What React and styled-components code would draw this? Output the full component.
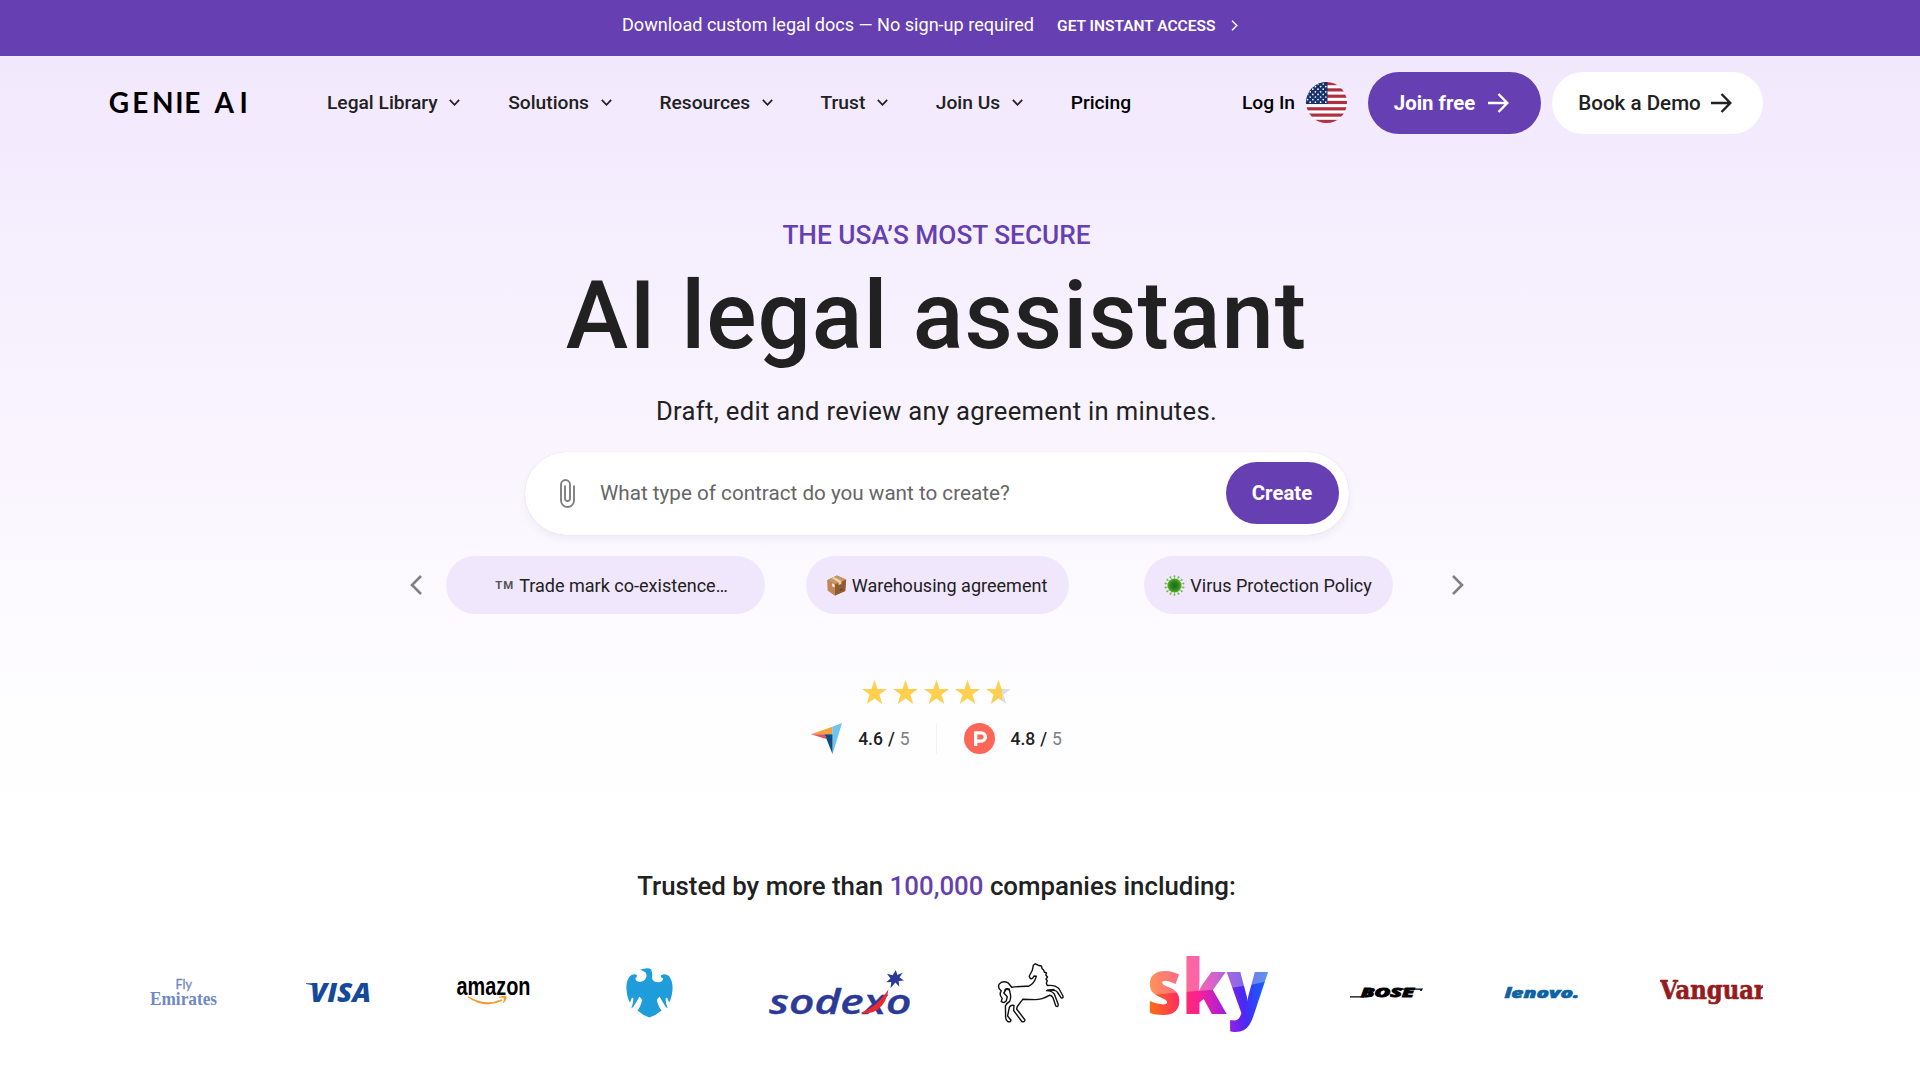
import React from "react";
import styled, { createGlobalStyle } from "styled-components";

const Global = createGlobalStyle`
  *{box-sizing:border-box}
  body{margin:0;background:#fff;font-family:Roboto,"Liberation Sans",sans-serif;color:#212121;overflow:hidden}
  button{font-family:inherit;border:0;margin:0;padding:0;cursor:pointer}
  svg{display:block;flex:none}
`;
const Page = styled.div`
  width:1920px;height:1080px;overflow:hidden;
  background:linear-gradient(180deg,#f2e8fd 56px,#f5effe 240px,#f9f4fe 440px,#fcfaff 600px,#fff 810px);
`;
const Banner = styled.div`
  height:56px;background:#663fb3;color:#fff;display:flex;align-items:center;
  padding:0 0 6px 622px;white-space:nowrap;
`;
const BannerText = styled.span`font-size:18.07px;line-height:24px;`;
const BannerLink = styled.a`
  display:flex;align-items:center;gap:16px;margin-left:23px;font-size:15.5px;font-weight:600;line-height:24px;
  padding-top:1px;
`;
const Container = styled.div`width:1653px;margin-left:110px;`;
const Header = styled.header`height:94px;display:flex;align-items:center;white-space:nowrap;`;
const Nav = styled.nav`display:flex;gap:48px;margin-left:81px;padding-bottom:1px;`;
const NavItem = styled.a`
  display:flex;align-items:center;gap:11.5px;font-size:19.2px;font-weight:500;line-height:24px;
  color:${(p) => (p.$dark ? "#000" : "#212121")};
`;
const Actions = styled.div`display:flex;align-items:center;margin-left:auto;`;
const Account = styled.div`display:flex;align-items:center;gap:11px;padding-bottom:1px;`;
const Login = styled.a`font-size:19.2px;font-weight:500;color:#000;`;
const Pill = styled.button`
  height:62px;border-radius:31px;display:flex;align-items:center;justify-content:center;
  gap:${(p) => p.$gap || 0}px;width:${(p) => p.$w}px;margin-left:${(p) => p.$ml || 0}px;
  padding:0 ${(p) => p.$pr || 0}px 1px 0;
  font-size:${(p) => (p.$light ? 20.6 : 20.4)}px;font-weight:${(p) => (p.$light ? 500 : 700)};
  background:${(p) => (p.$light ? "#fff" : "#663fb3")};color:${(p) => (p.$light ? "#212121" : "#fff")};
`;
const Hero = styled.main`padding-top:69px;display:flex;flex-direction:column;align-items:center;`;
const Eyebrow = styled.div`font-size:26.25px;font-weight:500;line-height:32px;color:#663fb3;`;
const Title = styled.h1`margin:15px 0 0;font-size:94px;font-weight:500;line-height:100px;letter-spacing:1px;`;
const Sub = styled.p`margin:29px 0 0;font-size:25.6px;line-height:32px;letter-spacing:.32px;`;
const Search = styled.div`
  margin-top:25px;width:824px;height:83px;border-radius:41.5px;background:#fff;display:flex;align-items:center;
  padding:0 10px 1px 35px;box-shadow:0 0 1px rgba(0,0,0,.14),0 4px 8px rgba(60,30,100,.06);
`;
const Placeholder = styled.span`flex:1;margin-left:25.5px;font-size:20.67px;color:#666;`;
const Suggestions = styled.div`margin-top:21px;height:58px;width:1054px;display:flex;align-items:center;`;
const NextArrow = styled.div`margin-left:59px;`;
const Chip = styled.button`
  height:58px;border-radius:29px;background:#f1e7fd;width:${(p) => p.$w}px;margin-left:${(p) => p.$ml}px;
  padding:1px 0 0 ${(p) => p.$pl || 0}px;
  display:flex;align-items:center;justify-content:center;gap:5px;font-size:18.05px;color:#212121;white-space:nowrap;
`;
const TradeMark = styled.span`font-size:11.4px;font-weight:700;color:#555;letter-spacing:.9px;margin-top:-2px;`;
const Stars = styled.div`margin-top:66px;height:24px;display:flex;gap:6px;`;
const Ratings = styled.div`margin-top:19px;height:31px;display:flex;align-items:center;`;
const Score = styled.span`
  font-size:17.5px;font-weight:500;margin-left:16px;word-spacing:.6px;
  em{font-style:normal;font-weight:400;color:#808080}
`;
const Divider = styled.i`width:1px;height:31px;background:#f3f1f7;margin:0 27px 0 26px;`;
const Trusted = styled.h2`
  margin:116px 0 0;font-size:25.83px;font-weight:500;line-height:32px;text-align:center;
  b{font-weight:500;color:#663fb3}
`;
const Logos = styled.div`margin-top:51px;height:79px;display:flex;align-items:center;`;
const LogoSlot = styled.div`
  margin-left:${(p) => p.$ml}px;flex:none;
  svg{overflow:${(p) => (p.$clip ? "hidden" : "visible")}}
`;

const Caret = () => (
  <svg width="11" height="7" viewBox="0 0 11 7" fill="none" stroke="#212121" strokeWidth="1.7"><path d="M.8.8 5.5 5.8 10.2.8" /></svg>
);
const Arrow = ({ c }) => (
  <svg width="21" height="20" viewBox="0 0 21 20" fill="none" stroke={c} strokeWidth="2.4"><path d="M0 10H19M10.5 1 19.3 10 10.5 19" /></svg>
);
const Chevron = ({ left }) => (
  <svg width="12" height="20" viewBox="0 0 12 20" fill="none" stroke="#808080" strokeWidth="2.6"><path d={left ? "M11 1 2 10 11 19" : "M1 1 10 10 1 19"} /></svg>
);
const Flag = () => (
  <svg width="41" height="41" viewBox="0 0 41 41">
    <clipPath id="fc"><circle cx="20.5" cy="20.5" r="20.5" /></clipPath>
    <g clipPath="url(#fc)">
      <rect width="41" height="41" fill="#fff" />
      {[0, 1, 2, 3, 4, 5, 6].map((i) => <rect key={i} y={i * 6.3} width="41" height="3.2" fill="#b22f43" />)}
      <rect width="21.5" height="22" fill="#16326b" />
      {[0, 1, 2, 3, 4, 5, 6, 7].map((r) => [0, 1, 2, 3].map((c) => (
        <circle key={r + "-" + c} cx={1.6 + c * 5.2 + (r % 2) * 2.6} cy={2 + r * 2.6} r=".85" fill="#fff" />
      )))}
    </g>
  </svg>
);
const Clip = () => (
  <svg width="15" height="29" viewBox="0 0 15 29" fill="none" stroke="#808080" strokeWidth="1.9">
    <path d="M14 6.5V21.5A6.5 6.5 0 0 1 1 21.5V5.5A4.5 4.5 0 0 1 10 5.5V19.5A2.5 2.5 0 0 1 5 19.5V6.5" />
  </svg>
);
const Box = () => (
  <svg width="20" height="21" viewBox="0 0 20 21">
    <path d="M10 .5 19 4.5 18.2 16 8 20.5 .8 15.5 .5 5Z" fill="#a9713f" />
    <path d="M.5 5 8.2 9 8 20.5 .8 15.5Z" fill="#c08850" />
    <path d="M8.2 9 19.2 4.6 18.2 16 8 20.5Z" fill="#8f5c33" />
    <path d="M10 .5 19.2 4.6 8.2 9 .5 5Z" fill="#c99763" />
    <path d="M4.6 3 7 1.9 14.4 6 14.3 9 11.5 10.1 11.6 7.5Z" fill="#e8d0b0" />
    <path d="M5.2 8.2 7.6 9.4V12.6L5.2 11.3Z" fill="#f2eee8" />
    <path d="M13 15.2 16 14" stroke="#5e3b20" strokeWidth=".9" />
  </svg>
);
const Virus = () => (
  <svg width="21" height="21" viewBox="-10.5 -10.5 21 21">
    <defs><radialGradient id="vg"><stop offset="0" stopColor="#1d6b12" /><stop offset=".6" stopColor="#2f8a1c" /><stop offset="1" stopColor="#58b030" /></radialGradient></defs>
    {Array.from({ length: 14 }, (_, i) => (
      <g key={i} transform={`rotate(${i * 25.7})`}><path d="M0-6V-9" stroke="#7cc653" strokeWidth=".8" /><circle cy="-9.2" r="1" fill="#6fb948" /></g>
    ))}
    <circle r="7" fill="url(#vg)" />
  </svg>
);
const STAR = "M12.5 0 15.6 9H25L17.5 14.6 20.2 24 12.5 18.4 4.8 24 7.5 14.6 0 9H9.4Z";
const Star = ({ half }) => (
  <svg width="25" height="24" viewBox="0 0 25 24">
    <defs><linearGradient id="hs"><stop offset=".64" stopColor="#fdd04f" /><stop offset=".64" stopColor="#dedede" /></linearGradient></defs>
    <path d={STAR} fill={half ? "url(#hs)" : "#fdd04f"} />
  </svg>
);
const Capterra = () => (
  <svg width="31" height="31" viewBox="0 0 31 31">
    <path d="M0 11.3 21.3 3.7V11.3Z" fill="#fba03a" />
    <path d="M21.3 3.7 31 0 21.6 31Z" fill="#6cc5ec" />
    <path d="M0 11.3H13.8L15.3 16Z" fill="#e8505b" />
    <path d="M13.6 11.3H21.5V31Z" fill="#0f4c81" />
  </svg>
);
const ProductHunt = () => (
  <svg width="31" height="31" viewBox="0 0 31 31">
    <circle cx="15.5" cy="15.5" r="15.5" fill="#ff6658" />
    <path d="M11.7 23V9.9H17.3A4.1 4.1 0 0 1 17.3 18.1H11.7" fill="none" stroke="#fff" strokeWidth="3.3" />
  </svg>
);
const T = ({ x = 0, y, w, s, f, children, ...r }) => (
  <text x={x} y={y} textLength={w} lengthAdjust="spacingAndGlyphs" fontSize={s} fontFamily={f} {...r}>{children}</text>
);
const GenieLogo = () => (
  <svg width="136" height="22" viewBox="0 0 136 22" overflow="visible">
    <text x="-1.2 22.2 41.9 65.2 74.3 100 104.6 129.6" y="20.5" fontSize="28" fontFamily="Lato,sans-serif" fontWeight="700">GENIE AI</text>
  </svg>
);
const Emirates = () => (
  <svg width="67" height="28" viewBox="0 0 67 28" fill="#7088c4">
    <T x="25.5" y="9.6" w="16.5" s="12.5" f="Lato,sans-serif" fontWeight="400" stroke="#7088c4" strokeWidth=".3">Fly</T>
    <T y="25.6" w="67" s="19" f="Liberation Serif,serif" fontWeight="700">Emirates</T>
  </svg>
);
const Visa = () => (
  <svg width="65" height="20" viewBox="0 0 65 20" fill="#15499a">
    <T x="4" y="19.2" w="61" s="27" f="Open Sans,sans-serif" fontWeight="800" fontStyle="italic">VISA</T>
    <path d="M0 .2H9.5L11 5.7Q7 1.3 0 1Z" />
  </svg>
);
const Amazon = () => (
  <svg width="73" height="24" viewBox="0 0 73 24">
    <T x="-.5" y="14" w="74" s="25" f="Liberation Sans,sans-serif" fontWeight="700">amazon</T>
    <path d="M11 15.2Q29 25.5 44.5 18.2L45.5 19.8Q28 28.5 10.6 16.2Z" fill="#f9992b" />
    <path d="M42 16.4Q45 14.3 49.3 15.3 49.4 19.3 46.3 22 47.4 18.8 47 17Q45 16.2 42 16.4Z" fill="#f9992b" stroke="#f9992b" strokeWidth=".5" />
  </svg>
);
const Barclays = () => (
  <svg width="47" height="50" viewBox="0 0 47 50">
    <path fill="#1f9ddb" d="M14 1.8Q22-1.4 25.3 1.6 26.6 5 26.2 11.2 28.5 15 34 14 37.4 12.8 37.2 10.4 34.4 9.6 35 7.2 39 4.8 43 8 46.6 13 46.6 20 46.3 29 43 34.5L41 29.5 39.6 30.5Q40 37 42 40.5 39.5 39.5 37.3 35L33.5 28.5 30.8 32Q32.5 39 35.5 42.5 30 47.5 23.3 49.5 17 47.5 11.5 42.5Q14.5 39 16.2 32L13.5 28.5 9.7 35Q7.5 39.5 5 40.5 7 37 7.4 30.5L6 29.5 4 34.5Q.6 29 .4 20 .2 13 3.6 8.4 7 5 11 7 11 9.4 9.4 10.3 9.3 12.8 13 14 17 14.4 19.4 11 21.6 7.4 19.6 4.4 17.5 2.8 14 1.8Z" />
  </svg>
);
const Sodexo = () => (
  <svg width="142" height="46" viewBox="0 0 142 46" fill="#2b3a97">
    <T y="44.4" w="142.5" s="34.5" f="Open Sans,sans-serif" fontWeight="600" fontStyle="italic" stroke="#2b3a97" strokeWidth=".4">sodexo</T>
    <path d="M92 42.8Q104 38 111 30 116 25 119.5 19.3 118 32 109.5 39 101 45 92 42.8Z" fill="#ea2a2f" />
    <path d="M126.8 0 128.4 5 133.5 2.7 130.6 7.5 135 10.5 129.7 11 130.2 16.6 126.4 12.6 121.5 18.2 122.3 12 117.3 12.2 121.4 8.4 118 3.8 123.6 5.2Z" />
  </svg>
);
const Horse = () => (
  <svg width="67" height="60" viewBox="0 0 67 60" fill="none" stroke="#111" strokeWidth="1.4" strokeLinejoin="round">
    <path d="M37.3.8 40 2.2 43.4 3 44 5.6 45.8 7.3 46.3 9 48.5 10 47.8 12 49.5 14 48 16 49.3 18 48.3 20 49.3 22.5Q57 21.6 60.8 25.5L65 33Q65.4 35.6 63.2 34.8L59.5 29.5Q58 26 48.5 27.6 54 27.8 56.3 31L60.2 41.2Q60.5 44.4 57.8 43L55.6 36.5Q54.5 32.4 51.3 32.3 44 36.6 37 36.6L24.7 36.3 19.3 43.5 18.6 46 26.8 56.7Q27.2 59.4 23.8 58.5L15.6 47.5 16 42.5Q12.8 41.6 11.3 44.3L9.6 53 13 57.2Q12.8 59.6 9.6 58.5 7.2 56.8 7.6 52L7.4 43Q8.6 40 11.6 38.5 13.5 34 12 29.5L11.4 27 8.5 25.8 5.8 30 9.3 33.8 8.2 38 5.8 39.6 3.2 38.6 4.2 35.5Q.6 31.5 3.3 27.8-.8 25 1.2 21.2 4.4 17 10.5 20.2L13.7 24.3Q23 23 30.3 23.3 36.6 20.5 38.3 13.3L36 13Q34.6 16.4 32.4 15.6L31.2 13.3 34.3 7.3 35.3 2.3Z" />
    <path d="M12 26.5Q8 24.5 6.4 27.6M49 27.3 56.5 26.5" />
  </svg>
);
const Sky = () => (
  <svg width="118" height="74" viewBox="0 0 118 74">
    <defs>
      <linearGradient id="sg" gradientUnits="userSpaceOnUse" x1="0" y1="44" x2="118" y2="30">
        <stop offset="0" stopColor="#ff6a1a" /><stop offset=".22" stopColor="#ff3358" /><stop offset=".42" stopColor="#f91f9a" />
        <stop offset=".62" stopColor="#a01fe0" /><stop offset=".78" stopColor="#4a28f5" /><stop offset="1" stopColor="#0a6bff" />
      </linearGradient>
      <pattern id="sp" patternUnits="userSpaceOnUse" x="-10" y="-10" width="150" height="110" viewBox="-10 -10 150 110">
        <rect x="-10" y="-10" width="150" height="110" fill="url(#sg)" />
        <path d="M-10-10H140V20L118 25Q95 31 60 34 20 37-10 40Z" fill="#ffd27a" fillOpacity=".16" />
        <path d="M-10-10H140V20L118 25Q95 31 60 34 20 37-10 40Z" fill="#fff" fillOpacity=".2" />
      </pattern>
    </defs>
    <T x="-3" y="57.5" w="121" s="76" f="Open Sans,sans-serif" fontWeight="800" fill="url(#sp)">sky</T>
  </svg>
);
const Bose = () => (
  <svg width="73" height="10" viewBox="0 0 73 10">
    <T x="11" y="9.2" w="53" s="11.6" f="Open Sans,sans-serif" fontWeight="800" fontStyle="italic" stroke="#000" strokeWidth=".8">BOSE</T>
    <path d="M0 8.2H14V9.5H0ZM52 .5H73L71.5 3H70L70.4 1.8H52Z" />
  </svg>
);
const Lenovo = () => (
  <svg width="74" height="12" viewBox="0 0 74 12">
    <T x="-.5" y="11" w="75" s="13.6" f="Open Sans,sans-serif" fontWeight="800" fontStyle="italic" fill="#0f63a5" stroke="#0f63a5" strokeWidth=".6">lenovo.</T>
  </svg>
);
const Vanguard = () => (
  <svg width="103" height="28" viewBox="0 0 103 28">
    <T y="20" w="106" s="26.5" f="DejaVu Serif,serif" fontWeight="700" fill="#951b1e" stroke="#951b1e" strokeWidth=".7">Vanguar</T>
  </svg>
);

const menu = ["Legal Library", "Solutions", "Resources", "Trust", "Join Us"];
const companies = [
  [Emirates, 40], [Visa, 89], [Amazon, 86], [Barclays, 95.5], [Sodexo, 96],
  [Horse, 87], [Sky, 85], [Bose, 82], [Lenovo, 82], [Vanguard, 81],
];

export default function App() {
  return (
    <Page>
      <Global />
      <Banner>
        <BannerText>Download custom legal docs — No sign-up required</BannerText>
        <BannerLink>GET INSTANT ACCESS
          <svg width="7" height="11" viewBox="0 0 7 11" fill="none" stroke="#fff" strokeWidth="1.4"><path d="M1 .7 5.8 5.5 1 10.3" /></svg>
        </BannerLink>
      </Banner>
      <Container>
        <Header>
          <GenieLogo />
          <Nav>
            {menu.map((m) => <NavItem key={m}>{m}<Caret /></NavItem>)}
            <NavItem $dark>Pricing</NavItem>
          </Nav>
          <Actions>
            <Account><Login>Log In</Login><Flag /></Account>
            <Pill $w={173} $ml={21} $gap={13} $pr={6}>Join free<Arrow c="#fff" /></Pill>
            <Pill $w={211} $ml={11} $gap={10} $pr={5} $light>Book a Demo<Arrow c="#212121" /></Pill>
          </Actions>
        </Header>
        <Hero>
          <Eyebrow>THE USA’S MOST SECURE</Eyebrow>
          <Title>AI legal assistant</Title>
          <Sub>Draft, edit and review any agreement in minutes.</Sub>
          <Search>
            <Clip />
            <Placeholder>What type of contract do you want to create?</Placeholder>
            <Pill $w={113}>Create</Pill>
          </Search>
          <Suggestions>
            <Chevron left />
            <Chip $w={319} $ml={24} $pl={13}><TradeMark>TM</TradeMark>Trade mark co-existence…</Chip>
            <Chip $w={263} $ml={41}><Box />Warehousing agreement</Chip>
            <Chip $w={249} $ml={75}><Virus />Virus Protection Policy</Chip>
            <NextArrow><Chevron /></NextArrow>
          </Suggestions>
          <Stars><Star /><Star /><Star /><Star /><Star half /></Stars>
          <Ratings>
            <Capterra /><Score>4.6 / <em>5</em></Score>
            <Divider />
            <ProductHunt /><Score>4.8 / <em>5</em></Score>
          </Ratings>
        </Hero>
        <Trusted>Trusted by more than <b>100,000</b> companies including:</Trusted>
        <Logos>
          {companies.map(([Logo, ml], i) => (
            <LogoSlot key={i} $ml={ml} $clip={Logo === Vanguard}><Logo /></LogoSlot>
          ))}
        </Logos>
      </Container>
    </Page>
  );
}
